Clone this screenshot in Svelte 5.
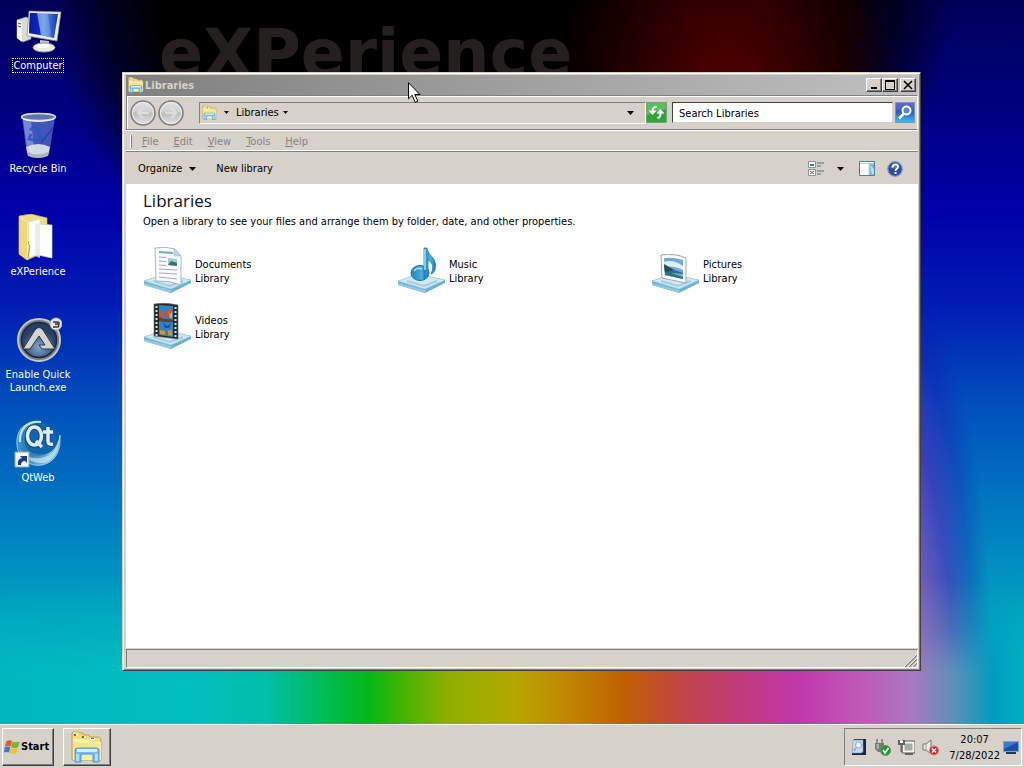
<script>
  const shortcuts = [
    { id: 'computer', label: 'Computer', focused: true },
    { id: 'bin', label: 'Recycle Bin' },
    { id: 'folder', label: 'eXPerience' },
    { id: 'autoit', label: 'Enable Quick Launch.exe' },
    { id: 'qt', label: 'QtWeb' }
  ];
  const menus = ['File', 'Edit', 'View', 'Tools', 'Help'];
  const libraries = ['Documents', 'Music', 'Pictures', 'Videos'];
  let query = $state('');
</script>

{#snippet explorer(size)}
  <svg width={size} height={size} viewBox="0 0 32 32" aria-hidden="true">
    <path d="M1 2l2-2h4l2 2h3l1 2h5l1 2h9l2 2v21H1z" fill="#f3d978" stroke="#c2a24c" />
    <path d="M3 3h4v2H3zM11 5h4v2h-4zM19 7h5v2h-5z" fill="#fffef0" />
    <path d="M3 3h2v2H3zM11 5h2v2h-2zM20 7h3v1h-3z" fill="#60703c" />
    <path d="M2 7l28 4v18H2z" fill="#fbeea6" />
    <path d="M2 11l27 2v3H2z" fill="#f5df84" opacity=".7" />
    <path d="M4 31V19q0-2 2-2h20q2 0 2 2v12h-6v-8H10v8z" fill="#74bdf0" stroke="#5596cc" />
    <path d="M6 18h20v3H6z" fill="#d4f0fc" />
    <path d="M5 23h3v7H5zM24 23h3v7h-3z" fill="#a8def8" />
  </svg>
{/snippet}

{#snippet caret()}
  <svg class="caret" width="7" height="4" viewBox="0 0 7 4" aria-hidden="true"><path d="M0 0h7L3.500 4z" /></svg>
{/snippet}

{#snippet desktopIcon(id)}
  <svg width="48" height="48" viewBox="0 0 48 48" aria-hidden="true">
    {#if id === 'computer'}
      <path d="M3 12l9-3 5 2v20l-8 3-6-4z" fill="#d8dcd4" stroke="#8e958e" stroke-width=".7" />
      <path d="M3 12l5 2v20l-5-4z" fill="#f6f6ee" />
      <path d="M4 15l3 1M4 18l3 1" stroke="#555" />
      <path d="M26 32l9 1v6h-9z" fill="#c2c8c4" />
      <ellipse cx="30" cy="39.500" rx="11" ry="4.500" fill="#e8eae4" stroke="#9aa09c" />
      <ellipse cx="29" cy="38" rx="7" ry="2" fill="#fff" />
      <path d="M15 3l32 1-4 29-30-5z" fill="#eceee8" stroke="#8a908c" stroke-width=".7" />
      <path d="M16 5l28 1-4 24-25-5z" fill="url(#screen)" />
      <path d="M16 5h7l4 22-12-2z" fill="#0010a0" opacity=".75" />
      <path d="M23 5l11 1 3 23-10-2z" fill="#a9cdf8" opacity=".35" />
    {:else if id === 'bin'}
      <path d="M8 6l5 38q11 6 22 0l6-38z" fill="#6f8ed8" opacity=".6" />
      <path d="M9 8l5 36q4 2 7 2L17 9z" fill="#d8e8ff" opacity=".35" />
      <path d="M12 36q12-6 24 0l-2 8q-10 5-20 0z" fill="#e2e5e6" opacity=".9" />
      <path d="M14 41q10 5 20 0v4q-10 4-20 0z" fill="#b1b5ba" />
      <path d="M16 19l4-3 5 3-3 3M25 23l2 5-5 2M20 29l-5-1 2-5" fill="none" stroke="#2359c8" stroke-width="3" opacity=".85" />
      <path d="M27 32l12-15" stroke="#274698" stroke-width="1.500" />
      <ellipse cx="24.500" cy="6" rx="17" ry="3.500" fill="#5a74b4" stroke="#d6dde8" stroke-width="1.500" />
      <path d="M9 8q15 5 31 0" fill="none" stroke="#f4f7fa" />
    {:else if id === 'folder'}
      <path d="M5 2l12-2 16 4v33L13 46 5 40z" fill="#f0dc86" stroke="#cdb35c" stroke-width=".7" />
      <path d="M14 8l12-3v34l-11 5z" fill="#fff" stroke="#d7d7d0" stroke-width=".7" />
      <path d="M24 10l14 1v33l-14-3z" fill="#fdfdfb" stroke="#d2d2cc" stroke-width=".7" />
      <path d="M5 2l10 6v19l-2 19-8-6z" fill="#eed777" />
      <path d="M6 3l8 6v17l-1 18" fill="none" stroke="#fff4b4" />
      <path d="M15 27q-2 3 1 5l-2 12" fill="none" stroke="#b89838" />
      <path d="M21 10v32l5 2V9z" fill="#e8e9e7" opacity=".8" />
    {:else if id === 'autoit'}
      <circle cx="25" cy="23" r="21" fill="#777d82" stroke="#c6c9c9" stroke-width="2" />
      <circle cx="25" cy="23" r="17.500" fill="url(#orb)" stroke="#202832" stroke-width="1.500" />
      <path d="M9 32l12-19q4-5 8 0l12 19H28l-3-4h6l-6-9-9 13z" fill="#d2d4d4" stroke="#30353b" />
      <circle cx="42" cy="7" r="6" fill="#e6e7e5" stroke="#b2b5b5" />
      <path d="M39 5h4q3 0 2 2h-4 3q2 3-1 3h-4" fill="none" stroke="#333" stroke-width="1.400" />
    {:else}
      <path d="M24 2C8 2 2 12 3 25c1 15 14 22 25 20 14-3 19-15 18-30-2 14-10 21-21 20-10-1-17-7-15-18C11 8 16 4 24 2z" fill="url(#qtblue)" stroke="#cbe7f4" stroke-width=".7" />
      <circle cx="25" cy="19" r="17" fill="#176aa6" opacity=".65" />
      <path d="M27 2C13 0 5 10 6 22" fill="none" stroke="#c7e5f3" stroke-width="2" />
      <path d="M46 15q-3 20-19 23-14 2-22-10 8 16 24 15 16-3 17-28z" fill="#eaf8ff" opacity=".55" />
      <g fill="none" stroke="#164b75" stroke-width="5.500"><ellipse cx="20.500" cy="16" rx="7" ry="9" /><path d="M22 21l6 6M34 7v14q0 4 5 3M29 12h10" /></g>
      <g fill="none" stroke="#ddecf3" stroke-width="3.500"><ellipse cx="20.500" cy="16" rx="7" ry="9" /><path d="M22 21l6 6M34 7v14q0 4 5 3M29 12h10" /></g>
      <path d="M1 32h14v15H1z" fill="#f3f6f8" stroke="#98a4ae" />
      <path d="M4 45q-1-6 4-7l-2-2h7v7l-2-2q-4 0-4 4z" fill="#1a4280" />
    {/if}
  </svg>
{/snippet}

{#snippet libraryIcon(name)}
  <svg width="48" height="48" viewBox="0 0 48 48" aria-hidden="true">
    <path d="M1 34l20-7 27 6v3L28 46 1 38z" fill="#6bb1d2" />
    <path d="M1 34l20-7 27 6-20 9z" fill="#cfe9f5" stroke="#9fcbe0" stroke-width=".7" />
    <path d="M1 36l27 7v3L1 38z" fill="#92cae3" />
    <path d="M10 34l17 5 13-5" fill="none" stroke="#91b9cc" stroke-width="2" opacity=".6" />
    {#if name === 'Documents'}
      <path d="M12 1q10-2 20 1l6 7v29q-12-5-25-4z" fill="#f9fbff" stroke="#93a5ca" stroke-width=".8" />
      <path d="M31 2v7h6z" fill="#c6d9e8" stroke="#92a7bc" stroke-width=".5" />
      <path d="M16 5l14 1" stroke="#68b5ad" stroke-width="2" />
      <path d="M16 10l7 .5M16 14l7 .5M16 18l7 .5M16 22l18 1M16 26l18 1M16 30l18 2" stroke="#a9a5cf" />
      <path d="M25 11l9 1v7l-9-1z" fill="#9fc9d8" /><path d="M25 18l3-4 6 2v3z" fill="#337868" />
    {:else if name === 'Music'}
      <ellipse cx="23" cy="26" rx="9" ry="7.500" fill="url(#note)" stroke="#1774a5" />
      <path d="M27 1h3c1 9 11 9 8 22-1 2-2 4-4 4 4-9 0-12-3-14v14q0 3-4 5z" fill="url(#note)" stroke="#1774a5" stroke-width=".7" />
      <path d="M28 2v21M17 24q3-4 8-2" fill="none" stroke="#a7e5fb" stroke-width="1.500" />
    {:else if name === 'Pictures'}
      <path d="M10 8q14-2 25 3v25l-24-5z" fill="#fcfdff" stroke="#98a7b5" />
      <path d="M13 11q10-1 19 2v19l-18-4z" fill="#6fa8e0" />
      <path d="M13 15q9-3 19 4v4q-10-5-18-3z" fill="#dfeef8" />
      <path d="M13 18q4 1 8 4l11 4v6l-18-4z" fill="#2d7184" />
      <path d="M13 17l10 6-9 2z" fill="#264b4c" /><path d="M20 26l12 1v3z" fill="#73b8d1" />
    {:else}
      <path d="M11 1q12-2 24 1v34l-24-3z" fill="#222c2c" stroke="#57635f" stroke-width=".6" />
      <path d="M16 2l14 1v14l-14-1zM16 18l14 1v15l-14-2z" fill="#3181c7" />
      <path d="M17 10l4-4v9h-4zM23 9q1-5 6-2v7l-3 2-3-4z" fill="#d84c30" />
      <path d="M25 7l2 5 2-4v7h-2z" fill="#e8b438" /><path d="M16 14l5 2 9 1v2l-14-1z" fill="#653d35" />
      <path d="M17 27l5 1v4l-5-1zM25 28q3-3 4 1v4l-4-1z" fill="#d9922f" /><path d="M20 20l4 3 4-2-2 4h-4z" fill="#1b4f9c" />
      <path d="M13.500 3v30M32.500 4v31" stroke="#d6e2e0" stroke-width="2" stroke-dasharray="2 2" />
    {/if}
  </svg>
{/snippet}

<svg class="defs" width="0" height="0" aria-hidden="true">
  <defs>
    <linearGradient id="screen"><stop stop-color="#1535bd" /><stop offset=".5" stop-color="#6293e5" /><stop offset="1" stop-color="#1033b8" /></linearGradient>
    <radialGradient id="orb" cy=".7"><stop stop-color="#80a7cd" /><stop offset="1" stop-color="#243f68" /></radialGradient>
    <linearGradient id="qtblue" x2="1" y2="1"><stop stop-color="#4faad8" /><stop offset=".5" stop-color="#287bb4" /><stop offset="1" stop-color="#a8dcf2" /></linearGradient>
    <linearGradient id="note" x2="1"><stop stop-color="#2585ba" /><stop offset=".6" stop-color="#48ade0" /><stop offset="1" stop-color="#1c7bb3" /></linearGradient>
    <linearGradient id="disc" x2="0" y2="1"><stop stop-color="#e4e4e2" /><stop offset=".45" stop-color="#cfcfcd" /><stop offset=".5" stop-color="#bcbcba" /><stop offset="1" stop-color="#e4e4e2" /></linearGradient>
    <linearGradient id="lens" x2="0" y2="1"><stop stop-color="#6a6ad0" /><stop offset=".5" stop-color="#2c5cc4" /><stop offset="1" stop-color="#38c4ec" /></linearGradient>
  </defs>
</svg>

<div class="screen">
  <main class="desktop">
    <div class="rainbow"></div>
    <div class="brand">eXPerience</div>

    <nav class="shortcuts" aria-label="Desktop">
      {#each shortcuts as item}
        <button class="shortcut">
          {@render desktopIcon(item.id)}
          <span class:focused={item.focused}>{item.label}</span>
        </button>
      {/each}
    </nav>

    <section class="window" aria-label="Libraries">
      <header class="titlebar">
        {@render explorer(16)}
        <h1>Libraries</h1>
        <div class="controls">
          <button aria-label="Minimize"><svg width="12" height="10" viewBox="0 0 12 10"><path d="M3 7h6v2H3z" /></svg></button>
          <button aria-label="Maximize"><svg width="12" height="10" viewBox="0 0 12 10"><path d="M1 0h10v10H1zM2 2v7h8V2z" fill-rule="evenodd" /></svg></button>
          <button class="close" aria-label="Close"><svg width="12" height="10" viewBox="0 0 12 10"><path d="M2 1l8 8M10 1l-8 8" stroke="#000" stroke-width="1.600" /></svg></button>
        </div>
      </header>

      <div class="address-row">
        <div class="travel">
          {#each ['Back', 'Forward'] as way}
            <button aria-label={way}>
              <svg width="26" height="26" viewBox="0 0 26 26">
                <circle cx="13" cy="13" r="12" fill="url(#disc)" stroke="#7c7c7a" stroke-width="1.500" />
                <circle cx="13" cy="13" r="10.500" fill="none" stroke="#ececea" stroke-width="1" />
                <path d={way === 'Back' ? 'M19 13H8M13 8l-5 5 5 5' : 'M7 13h11M13 8l5 5-5 5'} fill="none" stroke="#dededc" stroke-width="2" />
              </svg>
            </button>
          {/each}
        </div>
        <div class="address">
          {@render explorer(15)}
          <button class="crumb" aria-label="Locations">{@render caret()}</button>
          <button class="crumb">Libraries {@render caret()}</button>
          <button class="crumb history" aria-label="Previous locations">{@render caret()}</button>
        </div>
        <button class="refresh" aria-label="Refresh">
          <svg width="21" height="21" viewBox="0 0 21 21">
            <path d="M.5.5h20v20H.5z" fill="#2ea43a" stroke="#72a276" /><path d="M1 1h19v6L1 13z" fill="#5cbc5e" />
            <path d="M10.500 5Q6.500 5 6.500 9M14.500 10v2q0 3.500-3 4" fill="none" stroke="#fff" stroke-width="2" />
            <path d="M2.500 8.500h8l-4 4.500zM10.500 11.500h8l-4-4.500z" fill="#fff" />
          </svg>
        </button>
        <div class="search">
          <input type="text" aria-label="Search Libraries" placeholder="Search Libraries" bind:value={query} />
          <button aria-label="Search">
            <svg width="20" height="21" viewBox="0 0 20 21">
              <path d="M.5.5h19v20H.5z" fill="url(#lens)" stroke="#7991c0" />
              <circle cx="11.500" cy="8.500" r="4" fill="#5f83dc" stroke="#fff" stroke-width="2" /><path d="M8.500 12L4 16.500" stroke="#fff" stroke-width="2.500" />
            </svg>
          </button>
        </div>
      </div>

      <nav class="menubar" aria-label="Menu">
        {#each menus as menu}
          <button><u>{menu[0]}</u>{menu.slice(1)}</button>
        {/each}
      </nav>

      <div class="toolbar">
        <button>Organize {@render caret()}</button>
        <button>New library</button>
        <div class="view-tools">
          <button aria-label="Change your view">
            <svg width="17" height="16" viewBox="0 0 17 16"><path d="M.5.5h7v6h-7zM.5 8.500h7v6h-7z" fill="#fff" stroke="#8a949e" /><path d="M2 3h4v2H2z" fill="#477593" /><path d="M2 10l4 3M6 10l-4 3" stroke="#4d683a" /><path d="M9 2h7M9 5h4M9 10h7M9 13h4" stroke="#5a6b82" /></svg>
          </button>
          <button aria-label="More options">{@render caret()}</button>
          <button class="pane" aria-label="Show the preview pane">
            <svg width="16" height="15" viewBox="0 0 16 15"><path d="M.5.5h15v14H.5z" fill="#fff" stroke="#557e9c" /><path d="M10 2h5v12h-5z" fill="#80b9d6" /><path d="M10 1v13M1 2.500h14" stroke="#b9d2df" /><path d="M11 4l4 4v5h-2z" fill="#b2e1f2" /></svg>
          </button>
          <button aria-label="Get help">
            <svg width="16" height="16" viewBox="0 0 16 16"><circle cx="8" cy="8" r="7.300" fill="#284e9f" stroke="#8298c4" stroke-width="1.200" /><path d="M3 6q5-6 10 0-5 3-10 0z" fill="#698cca" opacity=".7" /><path d="M5.500 6.500q0-3 3-3t2.500 2.500q0 1-1.500 2Q8.500 8.500 8.500 10" fill="none" stroke="#fff" stroke-width="1.800" /><path d="M7.500 11h2v2h-2z" fill="#fff" /></svg>
          </button>
        </div>
      </div>

      <div class="content">
        <h2>Libraries</h2>
        <p>Open a library to see your files and arrange them by folder, date, and other properties.</p>
        <div class="libraries">
          {#each libraries as name}
            <button class="library">
              {@render libraryIcon(name)}
              <span>{name}<br />Library</span>
            </button>
          {/each}
        </div>
      </div>

      <footer class="status">
        <svg width="13" height="13" viewBox="0 0 13 13" aria-hidden="true"><path d="M1 13L13 1M5 13l8-8M9 13l4-4" stroke="#808080" stroke-width="1.500" /><path d="M0 13L13 0M4 13l9-9M8 13l5-5" stroke="#fff" stroke-width=".7" /></svg>
      </footer>
    </section>

    <svg class="pointer" width="13" height="21" viewBox="0 0 13 21" aria-hidden="true"><path d="M.5.800v16l3.700-3.500 3 7 2.600-1.100-3-6.700h5.100z" fill="#fff" stroke="#000" /></svg>
  </main>

  <footer class="taskbar">
    <button class="start">
      <svg width="16" height="16" viewBox="0 0 16 16" aria-hidden="true">
        <path d="M2.500 2q3-1.500 5.500 0L6.500 7.500Q4 6 1 7.500z" fill="#e5562a" /><path d="M8.500 2.500q3 1.500 7 0L14 8.500q-3 1-7-.500z" fill="#76b82f" />
        <path d="M.800 8.200q3-1.200 5.500 0L5 13.500q-2.500-1.200-5 0z" fill="#3d7cc7" /><path d="M6.800 8.700q3 1.500 7 .500L12.200 14.500Q9 15.500 5.500 13.700z" fill="#f2c22d" />
      </svg>
      Start
    </button>
    <button class="task" aria-label="Windows Explorer">{@render explorer(32)}</button>
    <div class="tray">
      <svg width="16" height="16" viewBox="0 0 16 16" aria-hidden="true"><path d="M3 0h12v16H1v-2z" fill="#182642" /><path d="M2 1h10v12l-2 1H1z" fill="#c9daf0" stroke="#7e95b5" stroke-width=".6" /><circle cx="7.500" cy="6" r="3" fill="#eef6ff" stroke="#8fa6c8" /><path d="M5 9l-2 3" stroke="#8fa6c8" stroke-width="1.500" /></svg>
      <svg width="17" height="17" viewBox="0 0 17 17" aria-hidden="true"><path d="M3 0v4M8 0v4" stroke="#777" stroke-width="1.500" /><path d="M1 4h9v6l-3 3H4l-3-3z" fill="#777b78" /><path d="M2 5h3v5H3z" fill="#aaa" /><circle cx="11.500" cy="11.500" r="5" fill="#24962d" stroke="#5d905f" /><path d="M9 11l2 3 3.500-5" fill="none" stroke="#fff" stroke-width="1.600" /></svg>
      <svg width="17" height="16" viewBox="0 0 17 16" aria-hidden="true"><path d="M5.500 3.500h10v9h-10z" fill="#aaa9a4" stroke="#f5f5f0" stroke-width="2" /><path d="M4 2h13v12H4z" fill="none" stroke="#66645e" /><path d="M7 15h8" stroke="#66645e" stroke-width="2" /><path d="M1 1v4h5V1M3.500 5v8" fill="none" stroke="#66645e" stroke-width="2" /><path d="M2 2h3v2H2z" fill="#fff" /></svg>
      <svg width="17" height="17" viewBox="0 0 17 17" aria-hidden="true"><path d="M1 5h3l5-4v14l-5-4H1z" fill="#eeece6" stroke="#77756f" /><path d="M4 5v6" stroke="#999" /><circle cx="12" cy="11.500" r="4.600" fill="#cf2933" stroke="#e88b8b" /><path d="M10 9.500l4 4M14 9.500l-4 4" stroke="#fff" stroke-width="1.600" /></svg>
      <time>20:07<br />7/28/2022</time>
      <button class="show" aria-label="Show desktop">
        <svg width="16" height="14" viewBox="0 0 16 14"><path d="M0 1h16v11H0z" fill="#7fa3cc" /><path d="M1 2h14v9H1z" fill="#1d4eaa" /><path d="M1 2h14L1 9z" fill="#397bd0" /><path d="M3 12h10v2H3z" fill="#20365c" /></svg>
      </button>
    </div>
  </footer>
</div>

<style>
  :global(body) { background: #000; }
  .defs { position: absolute; }
  .screen {
    display: flex;
    flex-direction: column;
    min-height: 100vh;
    font: 11px/14px Tahoma, "DejaVu Sans Condensed", "Noto Sans", sans-serif;
    color: #000;
  }
  button { border: 0; padding: 0; background: none; font: inherit; color: inherit; }
  svg { display: block; flex: none; }
  .caret { fill: #000; }

  .desktop {
    position: relative;
    flex: 1;
    display: flex;
    overflow: hidden;
    background:
      radial-gradient(ellipse 17% 34% at 71% 14%, #580000 0%, #380000c0 50%, #20000000 100%),
      radial-gradient(ellipse 44% 50% at 49% 0%, #000 0%, #000 76%, #0009 88%, #0000 100%),
      radial-gradient(ellipse 11% 62% at 86% 96%, #b060b8 0%, #8858b8e0 40%, #5828b8a0 65%, #3000b040 84%, #3000b000 100%),
      linear-gradient(180deg, #000058 0%, #000080 15%, #0000a8 29%, #001cb4 42%, #0050bc 56%, #0078c0 70%, #00a0c0 84%, #00bcc0 100%);
  }
  .rainbow {
    position: absolute;
    inset: 80% 0 0;
    background: linear-gradient(90deg, #00b8c0 0%, #00bfbf 19%, #00c0a8 26%, #00bc50 32%, #04b818 36%, #50b400 40%, #90b000 44%, #b4a800 50%, #c09000 54%, #c06000 61%, #c04840 66%, #c03c70 71%, #c038ac 78%, #c058b8 84%, #a878c0 89%, #6090b8 93%, #009cc0 97%, #00b0c0 100%);
    mask-image: linear-gradient(180deg, transparent, #0006 35%, #000 65%);
  }
  .brand {
    position: absolute;
    left: 159px;
    top: 18px;
    font: bold 65px/72px "DejaVu Sans", sans-serif;
    color: #242020;
  }
  .pointer { position: absolute; left: 408px; top: 82px; }

  .shortcuts { position: relative; display: grid; grid-template-columns: 76px; grid-auto-rows: 103px; align-content: start; }
  .shortcut {
    display: flex;
    flex-direction: column;
    align-items: center;
    gap: 2px;
    padding-top: 8px;
    line-height: 13px;
    color: #fff;
  }
  .shortcut span { border: 1px solid transparent; }
  .shortcut .focused { border: 1px dotted #fff; }

  .window {
    position: absolute;
    inset: 72px 103px 53px 122px;
    display: flex;
    flex-direction: column;
    padding: 2px 1px 2px 2px;
    border: 1px solid;
    border-color: #d4d0c8 #404040 #404040 #d4d0c8;
    box-shadow: inset 1px 1px #fff, inset -1px -1px #808080;
    background: #d6d2ca;
  }
  .titlebar {
    display: flex;
    align-items: center;
    height: 20px;
    margin: 0 1px;
    padding: 0 2px;
    background: linear-gradient(90deg, #808080, #c0c0c0);
    color: #d6d2ca;
  }
  h1 { margin: 0 0 0 1px; padding-top: 1px; font-size: 11px; line-height: 14px; }
  .controls { display: flex; margin-left: auto; }
  .controls button, .start, .task {
    border: 1px solid;
    border-color: #fff #404040 #404040 #fff;
    box-shadow: inset -1px -1px #808080;
    background: #d6d2ca;
  }
  .controls button { display: grid; place-items: center; width: 16px; height: 14px; }
  .controls .close { margin-left: 2px; }

  .address-row {
    display: flex;
    align-items: center;
    height: 33px;
    margin: 0 1px;
    border: 1px solid;
    border-color: #808080 #fff #808080 #808080;
    box-shadow: inset 1px 1px #fff, 0 1px #fff;
    padding: 0 2px 0 3px;
  }
  .travel { display: flex; gap: 2px; margin-right: 15px; }
  .address {
    flex: 1;
    display: flex;
    align-items: center;
    gap: 7px;
    height: 20px;
    padding-left: 2px;
    border: 1px solid;
    border-color: #808080 #fff #fff #808080;
  }
  .crumb { display: flex; align-items: center; gap: 4px; }
  .crumb :global(.caret) { width: 5px; height: 3px; }
  .crumb.history { margin-left: auto; margin-right: 11px; }
  .crumb.history :global(.caret) { width: 7px; height: 4px; }
  .search { display: flex; gap: 2px; margin-left: 5px; }
  .search input {
    box-sizing: border-box;
    width: 221px;
    height: 21px;
    padding: 1px 6px 0;
    border: 1px solid;
    border-color: #404040 #d4d0c8 #d4d0c8 #404040;
    border-radius: 0;
    background: #fff;
    font: inherit;
    color: #000;
  }
  .search input::placeholder { color: #000; opacity: 1; }

  .menubar {
    display: flex;
    align-items: center;
    gap: 15px;
    height: 17px;
    margin: 1px 1px 0;
    padding: 2px 0 0 16px;
    border-bottom: 1px solid #fff;
    box-shadow: 0 1px #808080;
    color: #86847e;
    background:
      linear-gradient(#808080, #808080) 5px 4px / 1px 13px no-repeat,
      linear-gradient(#fff, #fff) 4px 4px / 1px 13px no-repeat;
  }
  .toolbar { display: flex; align-items: center; gap: 20px; height: 31px; margin-top: 1px; padding: 1px 16px 0 13px; }
  .toolbar button { display: flex; align-items: center; gap: 7px; }
  .view-tools { display: flex; align-items: center; gap: 12px; margin-left: auto; }
  .view-tools .pane { margin-left: 3px; }

  .content { flex: 1; margin: 0 1px; padding: 5px 13px 5px 17px; background: #fff; }
  h2 { margin: 0 0 2px; font: 17px/24px "Open Sans", sans-serif; color: #101020; }
  p { margin: 0; }
  .libraries { display: grid; grid-template-columns: repeat(auto-fill, minmax(240px, 1fr)); grid-auto-rows: 56px; margin-top: 14px; }
  .library { display: flex; align-items: center; gap: 4px; text-align: left; }
  .library span { padding-top: 2px; }
  .status {
    display: flex;
    justify-content: flex-end;
    align-items: flex-end;
    height: 17px;
    margin: 1px 1px 0;
    border: 1px solid;
    border-color: #808080 #fff #fff #808080;
  }

  .taskbar {
    display: flex;
    align-items: stretch;
    box-sizing: border-box;
    height: 44px;
    padding: 3px 2px 2px;
    border-top: 1px solid #fff;
    background: #d6d2ca;
  }
  .start { display: flex; align-items: center; gap: 1px; width: 52px; padding-left: 1px; font-weight: bold; }
  .task { display: grid; place-items: center; width: 48px; margin-left: 9px; }
  .tray {
    display: flex;
    align-items: center;
    gap: 7px;
    margin-left: auto;
    padding: 0 2px 0 6px;
    border: 1px solid;
    border-color: #808080 #fff #fff #808080;
  }
  time { margin-left: 3px; padding-top: 1px; line-height: 16px; text-align: center; }
  .show { margin-left: -4px; }
</style>
